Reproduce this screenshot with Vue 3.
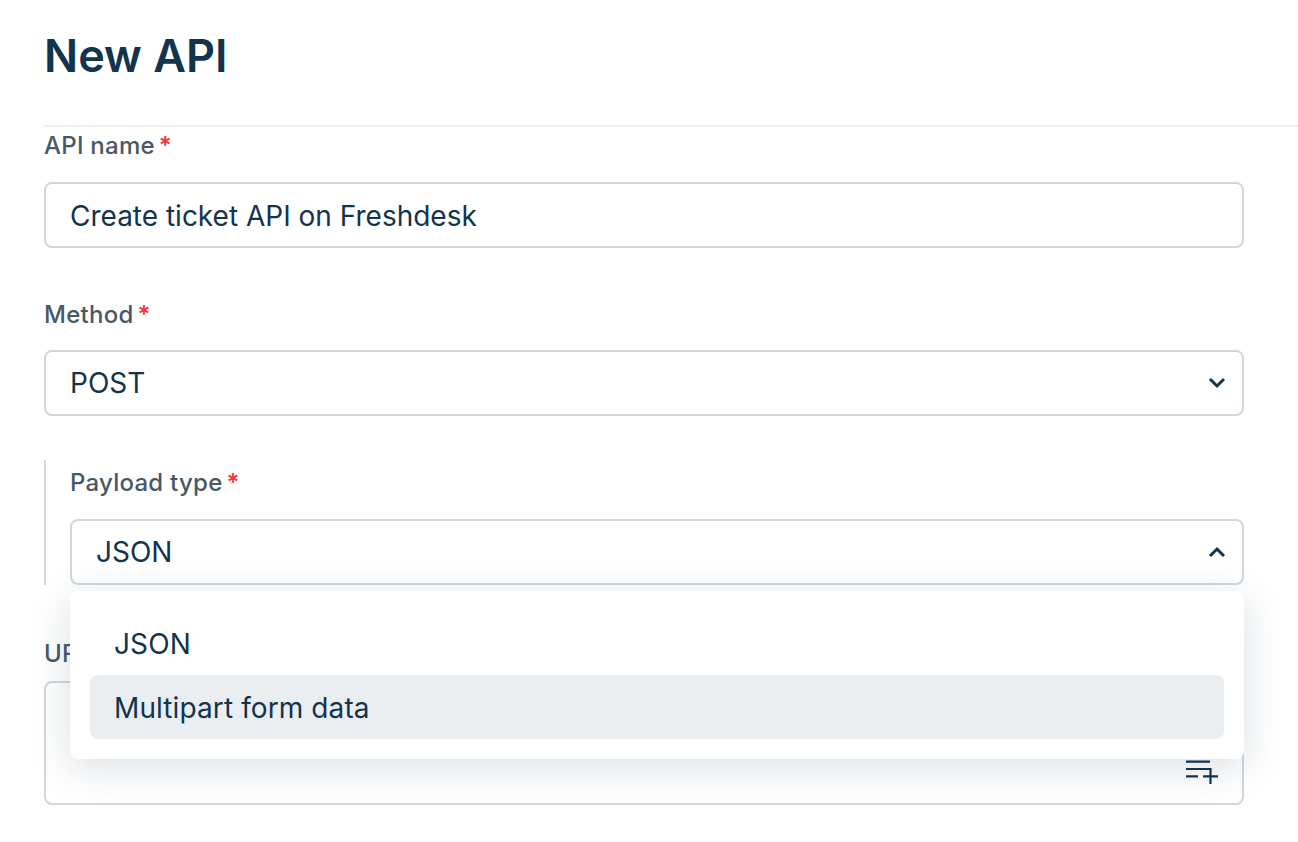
<template>
  <div class="page">
    <h1 class="title">New API</h1>
    <form class="form">
      <div class="field first">
        <label class="label">API name<span class="req">*</span></label>
        <div class="control">Create ticket API on Freshdesk</div>
      </div>

      <div class="field">
        <label class="label">Method<span class="req">*</span></label>
        <div class="control select">
          POST
          <svg class="chevron" width="20" height="14" viewBox="0 0 20 14">
            <path d="M3 3l7 7 7-7" fill="none" stroke="#12344d" stroke-width="3" />
          </svg>
        </div>
      </div>

      <div class="nested">
        <div class="field inner">
          <label class="label">Payload type<span class="req">*</span></label>
          <div class="control select">
            JSON
            <svg class="chevron" width="20" height="14" viewBox="0 0 20 14">
              <path d="M3 11l7-7 7 7" fill="none" stroke="#12344d" stroke-width="3" />
            </svg>
          </div>
          <ul class="menu">
            <li v-for="opt in payloadTypes" :key="opt" class="option" :class="{ active: opt === hovered }">
              {{ opt }}
            </li>
          </ul>
        </div>
      </div>

      <div class="field url">
        <label class="label">URL<span class="req">*</span></label>
        <div class="control area">
          <svg class="add-icon" width="34" height="26" viewBox="0 0 34 26">
            <path d="M0 1.700h24M0 9h24M0 16.300h12M17 16.300h15M24.500 8v16" fill="none" stroke="#12344d" stroke-width="2.200" />
          </svg>
        </div>
      </div>
    </form>
  </div>
</template>

<script setup>
const payloadTypes = ["JSON", "Multipart form data"];
const hovered = "Multipart form data";
</script>

<style>
html,
body {
  background: #fff;
  overflow: hidden;
}
</style>

<style scoped>
.page {
  height: 842px;
  padding-left: 44px;
  font-family: Inter, "Liberation Sans", sans-serif;
  color: #12344d;
  box-sizing: border-box;
}

.title {
  margin: 0;
  height: 127px;
  padding-top: 31px;
  box-sizing: border-box;
  font-size: 45px;
  line-height: 50px;
  font-weight: 600;
  border-bottom: 2px solid #ebeff3;
}

.form {
  padding-right: 54px;
}

.field {
  margin-top: 48px;
}

.field.first {
  margin-top: 0;
}

.field.inner {
  margin-top: 0;
  position: relative;
}

.label {
  display: block;
  height: 38px;
  font-size: 24px;
  line-height: 38px;
  font-weight: 500;
  letter-spacing: 0.25px;
  color: #475867;
}

.req {
  margin-left: 4px;
  color: #f5373a;
  font-weight: 600;
}

.control {
  position: relative;
  height: 66px;
  margin-top: 17px;
  padding-left: 24px;
  border: 2px solid #cfd7df;
  border-radius: 8px;
  box-sizing: border-box;
  font-size: 28px;
  line-height: 64px;
  background: #fff;
}

.select {
  margin-top: 16px;
  line-height: 62px;
}

.inner .select {
  margin-top: 17px;
}

.chevron {
  position: absolute;
  right: 15px;
  top: 24px;
}

.nested {
  margin-top: 44px;
  padding-top: 4px;
  padding-left: 24px;
  border-left: 2px solid #cfd7df;
}

.menu {
  position: absolute;
  left: 0;
  right: 0;
  top: 127px;
  z-index: 2;
  margin: 0;
  padding: 20px;
  height: 168px;
  box-sizing: border-box;
  list-style: none;
  background: #fff;
  border-radius: 8px;
  box-shadow: 0 8px 40px rgba(18, 52, 77, 0.16);
}

.option {
  height: 64px;
  padding-left: 24px;
  border-radius: 8px;
  font-size: 28px;
  line-height: 66px;
  letter-spacing: 0.1px;
}

.option.active {
  background: #ebeef1;
}

.url {
  margin-top: 50px;
}

.area {
  height: 124px;
  margin-top: 8px;
}

.add-icon {
  position: absolute;
  left: 1140px;
  bottom: 17px;
}
</style>
